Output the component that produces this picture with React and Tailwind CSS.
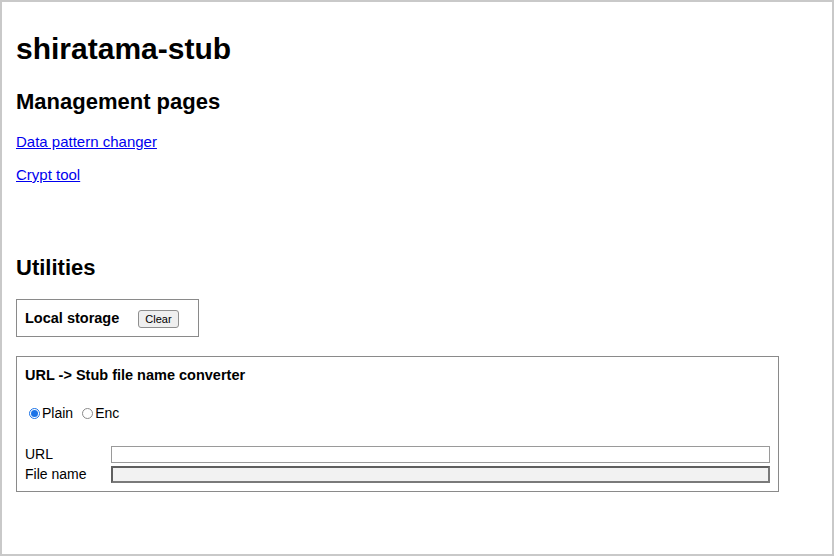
export default function App() {
  return (
    <div
      className="w-[834px] h-[556px] border-2 border-[#c9c9c9] bg-white pl-[14px] pt-[29px] text-black overflow-hidden"
      style={{ fontFamily: '"Liberation Sans", Arial, sans-serif' }}
    >
      <h1 className="text-[30px] leading-[36px] font-bold">shiratama-stub</h1>

      <h2 className="mt-[21px] text-[22px] leading-[28px] font-bold">Management pages</h2>
      <div className="mt-4 text-[15px] leading-5">
        <a href="#" className="text-[#0000ee] underline">Data pattern changer</a>
      </div>
      <div className="mt-[13px] text-[15px] leading-5">
        <a href="#" className="text-[#0000ee] underline">Crypt tool</a>
      </div>

      <h2 className="mt-[69px] text-[22px] leading-[28px] font-bold">Utilities</h2>

      {/* Local storage */}
      <div className="mt-[17px] w-[183px] h-[38px] border border-[#8a8a8a] flex items-center px-2 pt-[2px]">
        <span className="text-[14.5px] font-bold">Local storage</span>
        <button className="ml-[19px] h-[18px] px-[6px] text-[11px] leading-none border border-[#8f8f8f] rounded-[3px] bg-[#efefef]">
          Clear
        </button>
      </div>

      {/* Converter */}
      <div className="mt-[19px] w-[763px] border border-[#8a8a8a] px-2 pt-2 pb-2">
        <div className="text-[14.5px] leading-5 font-bold">URL -&gt; Stub file name converter</div>

        <div className="mt-[18px] h-5 flex items-center text-[14px] pl-1">
          <span className="w-[11px] h-[11px] rounded-full border border-[#1a73e8] flex items-center justify-center">
            <span className="w-[7px] h-[7px] rounded-full bg-[#1a73e8]" />
          </span>
          <span className="ml-[2px]">Plain</span>
          <span className="ml-[9px] w-[11px] h-[11px] rounded-full border border-[#8a8a8a]" />
          <span className="ml-[2px]">Enc</span>
        </div>

        <div className="mt-[23px] grid grid-cols-[86px_1fr] gap-y-[3px] text-[14px] items-center">
          <span className="leading-[17px]">URL</span>
          <input
            type="text"
            readOnly
            className="h-[17px] w-full border border-[#9a9a9a] bg-white outline-none"
          />
          <span className="leading-[17px]">File name</span>
          <input
            type="text"
            readOnly
            className="h-[17px] w-full border-2 border-t-[#5f5f5f] border-l-[#5f5f5f] border-r-[#7a7a7a] border-b-[#7a7a7a] bg-[#f2f2f2] outline-none"
          />
        </div>
      </div>
    </div>
  )
}
